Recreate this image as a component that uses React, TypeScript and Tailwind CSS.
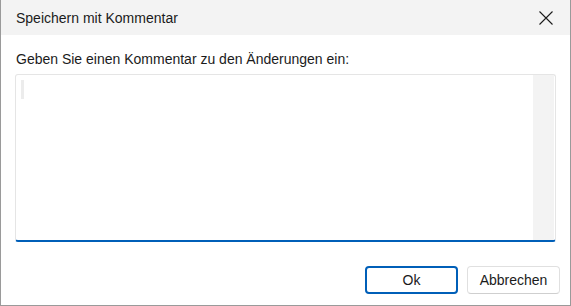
import React from "react";

export default function App() {
  return (
    <div
      className="w-[571px] h-[306px] bg-white border-l border-r border-b border-[#9a9a9a] flex flex-col text-[14px] text-[#1b1b1b]"
      style={{ fontFamily: '"Liberation Sans", Arial, sans-serif' }}
    >
      <div className="h-[35px] bg-[#f3f3f3] flex items-center justify-between pl-[15px] pr-[17px] shrink-0">
        <span className="leading-none">Speichern mit Kommentar</span>
        <svg width="14" height="14" viewBox="0 0 14 14" className="block">
          <path d="M0.5 0.5 L13.5 13.5 M13.5 0.5 L0.5 13.5" stroke="#1b1b1b" strokeWidth="1.1" />
        </svg>
      </div>
      <div className="flex flex-col px-[14px] pt-[14px]">
        <div className="leading-[20px] pl-[1px]">Geben Sie einen Kommentar zu den Änderungen ein:</div>
        <div className="mt-[5px] h-[168px] border border-[#e5e5e5] border-b-2 border-b-[#005fb8] rounded-[3px] flex">
          <div className="flex-1 pl-[5px] pt-[5px]">
            <div className="w-[3px] h-[19px] bg-[#ececec]" />
          </div>
          <div className="w-[21px] bg-[#f3f3f3] mr-[1px]" />
        </div>
      </div>
      <div className="flex justify-end gap-[9px] pr-[10px] mt-[24px]">
        <button className="w-[93px] h-[28px] border-2 border-[#005fb8] rounded-[4px] bg-white flex items-center justify-center leading-none">
          Ok
        </button>
        <button className="w-[93px] h-[28px] border border-[#e0e0e0] border-b-[#cfcfcf] rounded-[4px] bg-white flex items-center justify-center leading-none">
          Abbrechen
        </button>
      </div>
    </div>
  );
}
